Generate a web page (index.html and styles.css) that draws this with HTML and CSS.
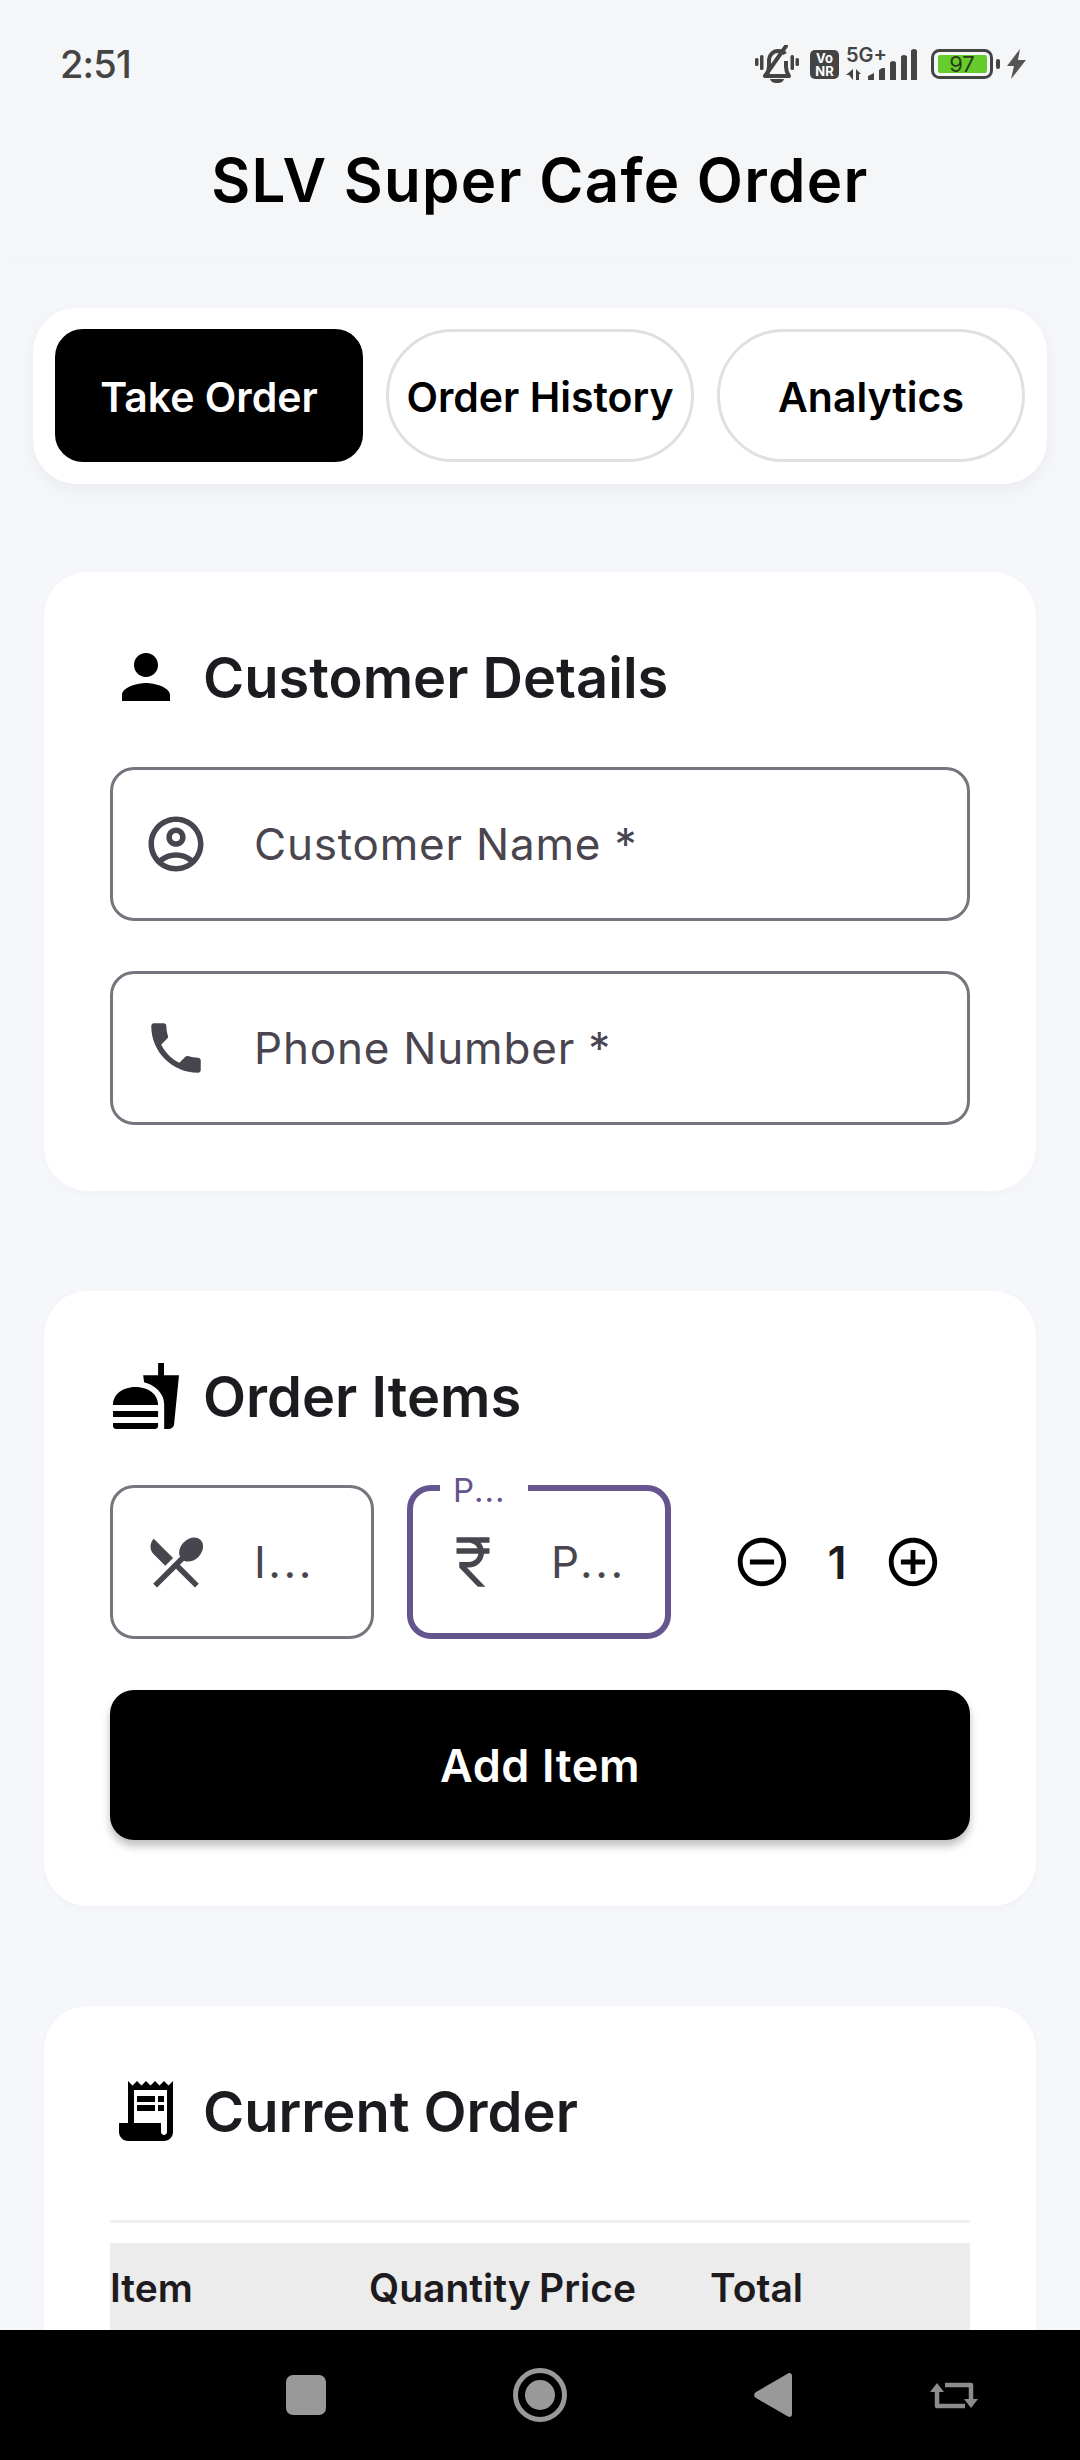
FILE: index.html
```html
<!DOCTYPE html>
<html lang="en">
<head>
<meta charset="utf-8">
<title>SLV Super Cafe Order</title>
<link rel="stylesheet" href="styles.css">
</head>
<body>
<div class="screen">
  <header class="top">
    <div class="status">
      <span class="time">2:51</span>
      <div class="status-icons">
        <svg class="si-bell" width="44" height="38" viewBox="0 0 44 38"><g fill="#444"><rect x="0" y="13" width="3.500" height="8" rx="1.500"/><rect x="5" y="10" width="3.500" height="15" rx="1.500"/><rect x="35.500" y="10" width="3.500" height="15" rx="1.500"/><rect x="40.500" y="13" width="3.500" height="8" rx="1.500"/><path d="M15 34h14c-1 3-3 4-7 4s-6-1-7-4z"/></g><path d="M11 31c2-3 3-5 3-10v-5c0-6 4-10 9-10 3 0 6 1 7 3M31 16v6c0 4 1 6 3 9H11" fill="none" stroke="#444" stroke-width="4" stroke-linejoin="round"/><path d="M10 31L31 1" stroke="#444" stroke-width="4" stroke-linecap="round"/></svg>
        <svg class="si-vo" width="29" height="29" viewBox="0 0 29 29"><rect width="29" height="29" rx="5" fill="#444"/><text class="si-vo-text" x="14.500" y="13">Vo</text><text class="si-vo-text" x="14.500" y="25.500">NR</text></svg>
        <svg class="si-net" width="71" height="34" viewBox="0 0 71 34"><text class="si-5g" x="0" y="16">5G+</text><g fill="#444"><path d="M7 23v11l-4-5h-3zM10 23l5 5h-2v6h-3z"/><path d="M22 34v-4l6-3v7zM33 34v-10l3-2 3 0v12zM44 34v-17c0-1 1-2 3-2s3 1 3 2v17zM55 34v-23c0-1 1-2 3-2s3 1 3 2v23z"/><path d="M65 34v-29c0-1 1-2 3-2s3 1 3 2v29z"/></g></svg>
        <svg class="si-bat" width="69" height="30" viewBox="0 0 69 30"><rect x="1.500" y="1.500" width="59" height="27" rx="7" fill="none" stroke="#444" stroke-width="3"/><rect x="7" y="6" width="49" height="18" rx="2" fill="#66cc2e"/><text class="si-bat-text" x="31" y="22.500">97</text><rect x="65" y="10" width="4" height="10" rx="2" fill="#444"/></svg>
        <svg class="si-bolt" width="19" height="30" viewBox="0 0 19 30"><path d="M13 0L0 17h7l-3 13L19 11h-8z" fill="#555"/></svg>
      </div>
    </div>
    <h1 class="app-title">SLV Super Cafe Order</h1>
  </header>

  <main class="content">
    <nav class="tabs">
      <button class="tab tab-active">Take Order</button>
      <button class="tab">Order History</button>
      <button class="tab">Analytics</button>
    </nav>

    <section class="card">
      <div class="card-head">
        <svg class="head-icon" viewBox="0 0 24 24"><path d="M12 12c2.21 0 4-1.79 4-4s-1.79-4-4-4-4 1.79-4 4 1.79 4 4 4zm0 2c-2.67 0-8 1.34-8 4v2h16v-2c0-2.66-5.33-4-8-4z"/></svg>
        <h2 class="card-title">Customer Details</h2>
      </div>
      <div class="stack">
        <div class="field">
          <svg class="field-icon" viewBox="0 0 24 24"><path d="M12 2C6.48 2 2 6.48 2 12s4.48 10 10 10 10-4.48 10-10S17.52 2 12 2zM7.35 18.5C8.66 17.56 10.26 17 12 17s3.34.56 4.65 1.5C15.34 19.44 13.74 20 12 20s-3.34-.56-4.65-1.5zm10.79-1.38C16.45 15.8 14.32 15 12 15s-4.45.8-6.14 2.12C4.7 15.73 4 13.95 4 12c0-4.42 3.58-8 8-8s8 3.58 8 8c0 1.95-.7 3.73-1.86 5.12z"/><path d="M12 6c-1.93 0-3.5 1.57-3.5 3.5S10.07 13 12 13s3.5-1.57 3.5-3.5S13.93 6 12 6zm0 5c-.83 0-1.5-.67-1.5-1.5S11.17 8 12 8s1.5.67 1.5 1.5S12.83 11 12 11z"/></svg>
          <span class="field-text">Customer Name *</span>
        </div>
        <div class="field">
          <svg class="field-icon" viewBox="0 0 24 24"><path d="M6.62 10.79c1.44 2.83 3.76 5.14 6.59 6.59l2.2-2.2c.27-.27.67-.36 1.02-.24 1.12.37 2.33.57 3.57.57.55 0 1 .45 1 1V20c0 .55-.45 1-1 1-9.39 0-17-7.61-17-17 0-.55.45-1 1-1h3.5c.55 0 1 .45 1 1 0 1.25.2 2.45.57 3.57.11.35.03.74-.25 1.02l-2.2 2.2z"/></svg>
          <span class="field-text">Phone Number *</span>
        </div>
      </div>
    </section>

    <section class="card">
      <div class="card-head">
        <svg class="head-icon" viewBox="0 0 24 24"><path d="M18.06 22.99h1.66c.84 0 1.53-.64 1.63-1.46L23 5.05h-5V1h-1.97v4.05h-4.97l.3 2.34c1.71.47 3.31 1.32 4.27 2.26 1.44 1.42 2.43 2.89 2.43 5.29v8.05zM1 21.99V21h15.03v.99c0 .55-.45 1-1.01 1H2.01c-.56 0-1.01-.45-1.01-1zm15.03-7c0-8-15.03-8-15.03 0h15.03zM1.02 17h15v2h-15z"/></svg>
        <h2 class="card-title">Order Items</h2>
      </div>
      <div class="item-row">
        <div class="field field-small">
          <svg class="field-icon" viewBox="0 0 24 24"><path d="M8.1 13.34l2.83-2.83L3.91 3.5c-1.56 1.56-1.56 4.09 0 5.66l4.19 4.18zm6.78-1.81c1.53.71 3.68.21 5.27-1.38 1.91-1.91 2.28-4.65.81-6.12-1.46-1.46-4.2-1.1-6.12.81-1.59 1.59-2.09 3.74-1.38 5.27L3.7 19.87l1.41 1.41L12 14.41l6.88 6.88 1.41-1.41L13.41 13l1.47-1.47z"/></svg>
          <span class="field-text field-text-short">I...</span>
        </div>
        <div class="field field-small field-focus">
          <span class="float-label">P...</span>
          <svg class="field-icon" viewBox="0 0 24 24"><path d="M13.66 7C13.1 5.82 11.9 5 10.5 5L6 5V3h12v2l-3.26 0c.48.58.84 1.26 1.05 2L18 7v2l-2.02 0c-.25 2.8-2.61 5-5.48 5h-.73l6.73 7h-2.77L7 14v-2h3.5c1.76 0 3.22-1.3 3.46-3L6 9V7l7.66 0z"/></svg>
          <span class="field-text field-text-short">P...</span>
        </div>
        <div class="qty">
          <svg class="qty-icon" viewBox="0 0 24 24"><path d="M7 11v2h10v-2H7zm5-9C6.48 2 2 6.48 2 12s4.48 10 10 10 10-4.48 10-10S17.52 2 12 2zm0 18c-4.41 0-8-3.59-8-8s3.59-8 8-8 8 3.59 8 8-3.59 8-8 8z"/></svg>
          <span class="qty-value">1</span>
          <svg class="qty-icon" viewBox="0 0 24 24"><path d="M13 7h-2v4H7v2h4v4h2v-4h4v-2h-4V7zm-1-5C6.48 2 2 6.48 2 12s4.48 10 10 10 10-4.48 10-10S17.52 2 12 2zm0 18c-4.41 0-8-3.59-8-8s3.59-8 8-8 8 3.59 8 8-3.59 8-8 8z"/></svg>
        </div>
      </div>
      <button class="add-btn">Add Item</button>
    </section>

    <section class="card">
      <div class="card-head">
        <svg class="head-icon" viewBox="0 0 24 24"><path d="M19.5 3.5L18 2l-1.5 1.5L15 2l-1.5 1.5L12 2l-1.5 1.5L9 2 7.5 3.5 6 2v14H3v3c0 1.66 1.34 3 3 3h12c1.66 0 3-1.34 3-3V2l-1.5 1.5zM19 19c0 .55-.45 1-1 1s-1-.45-1-1v-3H8V5h11v14z"/><path d="M9 7h6v2H9zM16 7h2v2h-2zM9 10h6v2H9zM16 10h2v2h-2z"/></svg>
        <h2 class="card-title">Current Order</h2>
      </div>
      <hr class="divider">
      <div class="table-head">
        <span>Item</span><span>Quantity</span><span>Price</span><span>Total</span>
      </div>
    </section>
  </main>

  <footer class="navbar">
    <svg class="nav-icon" width="40" height="40" viewBox="0 0 40 40"><rect width="40" height="40" rx="7" fill="#999"/></svg>
    <svg class="nav-icon" width="54" height="54" viewBox="0 0 54 54"><circle cx="27" cy="27" r="24.5" fill="none" stroke="#999" stroke-width="5"/><circle cx="27" cy="27" r="15" fill="#999"/></svg>
    <svg class="nav-icon" width="38" height="46" viewBox="0 0 38 46"><path d="M34 1.500c2-1 4 0 4 2.500v38c0 2.500-2 3.500-4 2.500L2 26c-2.500-1.500-2.500-4.500 0-6z" fill="#999"/></svg>
    <svg class="nav-icon nav-recent" width="48" height="27" viewBox="0 0 48 27"><g fill="none" stroke="#8c8c8c" stroke-width="4.500" stroke-linejoin="round"><path d="M7 10v14h28"/><path d="M15 3h26v14"/></g><path d="M0 10L7 1l7 9zM34 17l7 9 7-9z" fill="#8c8c8c"/></svg>
  </footer>
</div>
</body>
</html>
```

FILE: styles.css
```css
* { box-sizing: border-box; }
html, body { margin: 0; padding: 0; }
body { font-family: Inter, "Noto Sans", "Liberation Sans", sans-serif; }

.screen {
  width: 1080px;
  height: 2460px;
  display: flex;
  flex-direction: column;
  overflow: hidden;
  background: #f5f7fb;
}

.top {
  flex: none;
  height: 258px;
  background: #f5f6f8;
  box-shadow: 0 4px 10px rgba(0, 0, 0, 0.012);
}
.status {
  height: 90px;
  padding: 38px 54px 0 60px;
  display: flex;
  align-items: center;
  justify-content: space-between;
}
.time { font-size: 38px; font-weight: 500; color: #444; letter-spacing: -0.8px; }
.status-icons { display: flex; align-items: center; }
.si-vo { margin-left: 11px; }
.si-net { margin-left: 7px; margin-top: -2px; }
.si-bat { margin-left: 14px; }
.si-bolt { margin-left: 7px; }
.si-vo-text { font-size: 13px; font-weight: 700; fill: #fff; text-anchor: middle; }
.si-5g { font-size: 20px; font-weight: 600; fill: #444; }
.si-bat-text { font-size: 22px; font-weight: 400; fill: #2a3a1a; text-anchor: middle; }

.app-title {
  margin: 0;
  height: 168px;
  padding-top: 12px;
  display: flex;
  align-items: center;
  justify-content: center;
  font-size: 60px;
  font-weight: 600;
  letter-spacing: 1.3px;
  color: #000;
}

.content {
  flex: 1;
  min-height: 0;
  overflow: hidden;
  padding-top: 50px;
}

.tabs {
  height: 176px;
  margin: 0 33px 88px;
  padding: 21px 22px 22px;
  display: flex;
  gap: 23px;
  background: #fff;
  border-radius: 44px;
  box-shadow: 0 6px 20px rgba(0, 0, 0, 0.05);
}
.tab {
  flex: 1;
  height: 133px;
  padding: 2px 0 0;
  border: 3px solid #e0e0e0;
  border-radius: 67px;
  background: #fff;
  color: #000;
  font-family: inherit;
  font-size: 41px;
  font-weight: 600;
}
.tab-active {
  border-color: #000;
  border-radius: 28px;
  background: #000;
  color: #fff;
}

.card {
  margin: 0 44px 100px;
  padding: 66px;
  background: #fff;
  border-radius: 44px;
  box-shadow: 0 3px 12px rgba(0, 0, 0, 0.025);
}
.card-head {
  height: 78px;
  margin-bottom: 50px;
  display: flex;
  align-items: center;
  gap: 21px;
}
.head-icon { flex: none; width: 72px; height: 72px; fill: #000; }
.card-title {
  margin: 2px 0 0;
  font-size: 56px;
  font-weight: 600;
  color: #1d1b20;
}

.stack { padding-top: 1px; display: flex; flex-direction: column; gap: 50px; }

.field {
  position: relative;
  height: 154px;
  padding-left: 30px;
  display: flex;
  align-items: center;
  gap: 45px;
  border: 3px solid #79747e;
  border-radius: 24px;
}
.field-icon { flex: none; width: 66px; height: 66px; fill: #49454f; }
.field-text {
  font-size: 44px;
  letter-spacing: 0.8px;
  color: #49454f;
}
.field-text-short { letter-spacing: 2.5px; }

.item-row { display: flex; gap: 33px; margin-bottom: 51px; }
.field-small { flex: none; width: 264px; }
.field-focus {
  padding-left: 27px;
  border: 6px solid #65558f;
}
.float-label {
  position: absolute;
  left: 27px;
  top: -21px;
  padding: 0 0 0 13px;
  width: 88px;
  background: #fff;
  color: #65558f;
  font-size: 33px;
  line-height: 40px;
  letter-spacing: 1px;
}

.qty { flex: 1; display: flex; align-items: center; justify-content: center; }
.qty-icon { flex: none; width: 58px; height: 58px; margin: 0 7px; fill: #000; }
.qty-value {
  width: 79px;
  text-align: center;
  font-size: 45px;
  font-weight: 600;
  color: #1d1b20;
}

.add-btn {
  display: block;
  width: 100%;
  height: 150px;
  padding: 0;
  border: 0;
  border-radius: 24px;
  background: #000;
  color: #fff;
  font-family: inherit;
  font-size: 45px;
  font-weight: 600;
  letter-spacing: 0.6px;
  box-shadow: 0 6px 9px rgba(0, 0, 0, 0.25);
}

.divider {
  height: 3px;
  margin: 70px 0 20px;
  border: 0;
  background: #f0eff1;
}
.table-head {
  height: 130px;
  padding-top: 21px;
  display: grid;
  grid-template-columns: 259px 170px 171px 1fr;
  background: #ececec;
  font-size: 39px;
  font-weight: 600;
  color: #1d1b20;
}

.navbar {
  flex: none;
  height: 130px;
  display: flex;
  align-items: center;
  padding-left: 286px;
  gap: 187px;
  background: #000;
}
.nav-icon { flex: none; }
.nav-recent { margin-left: -49px; }
```
